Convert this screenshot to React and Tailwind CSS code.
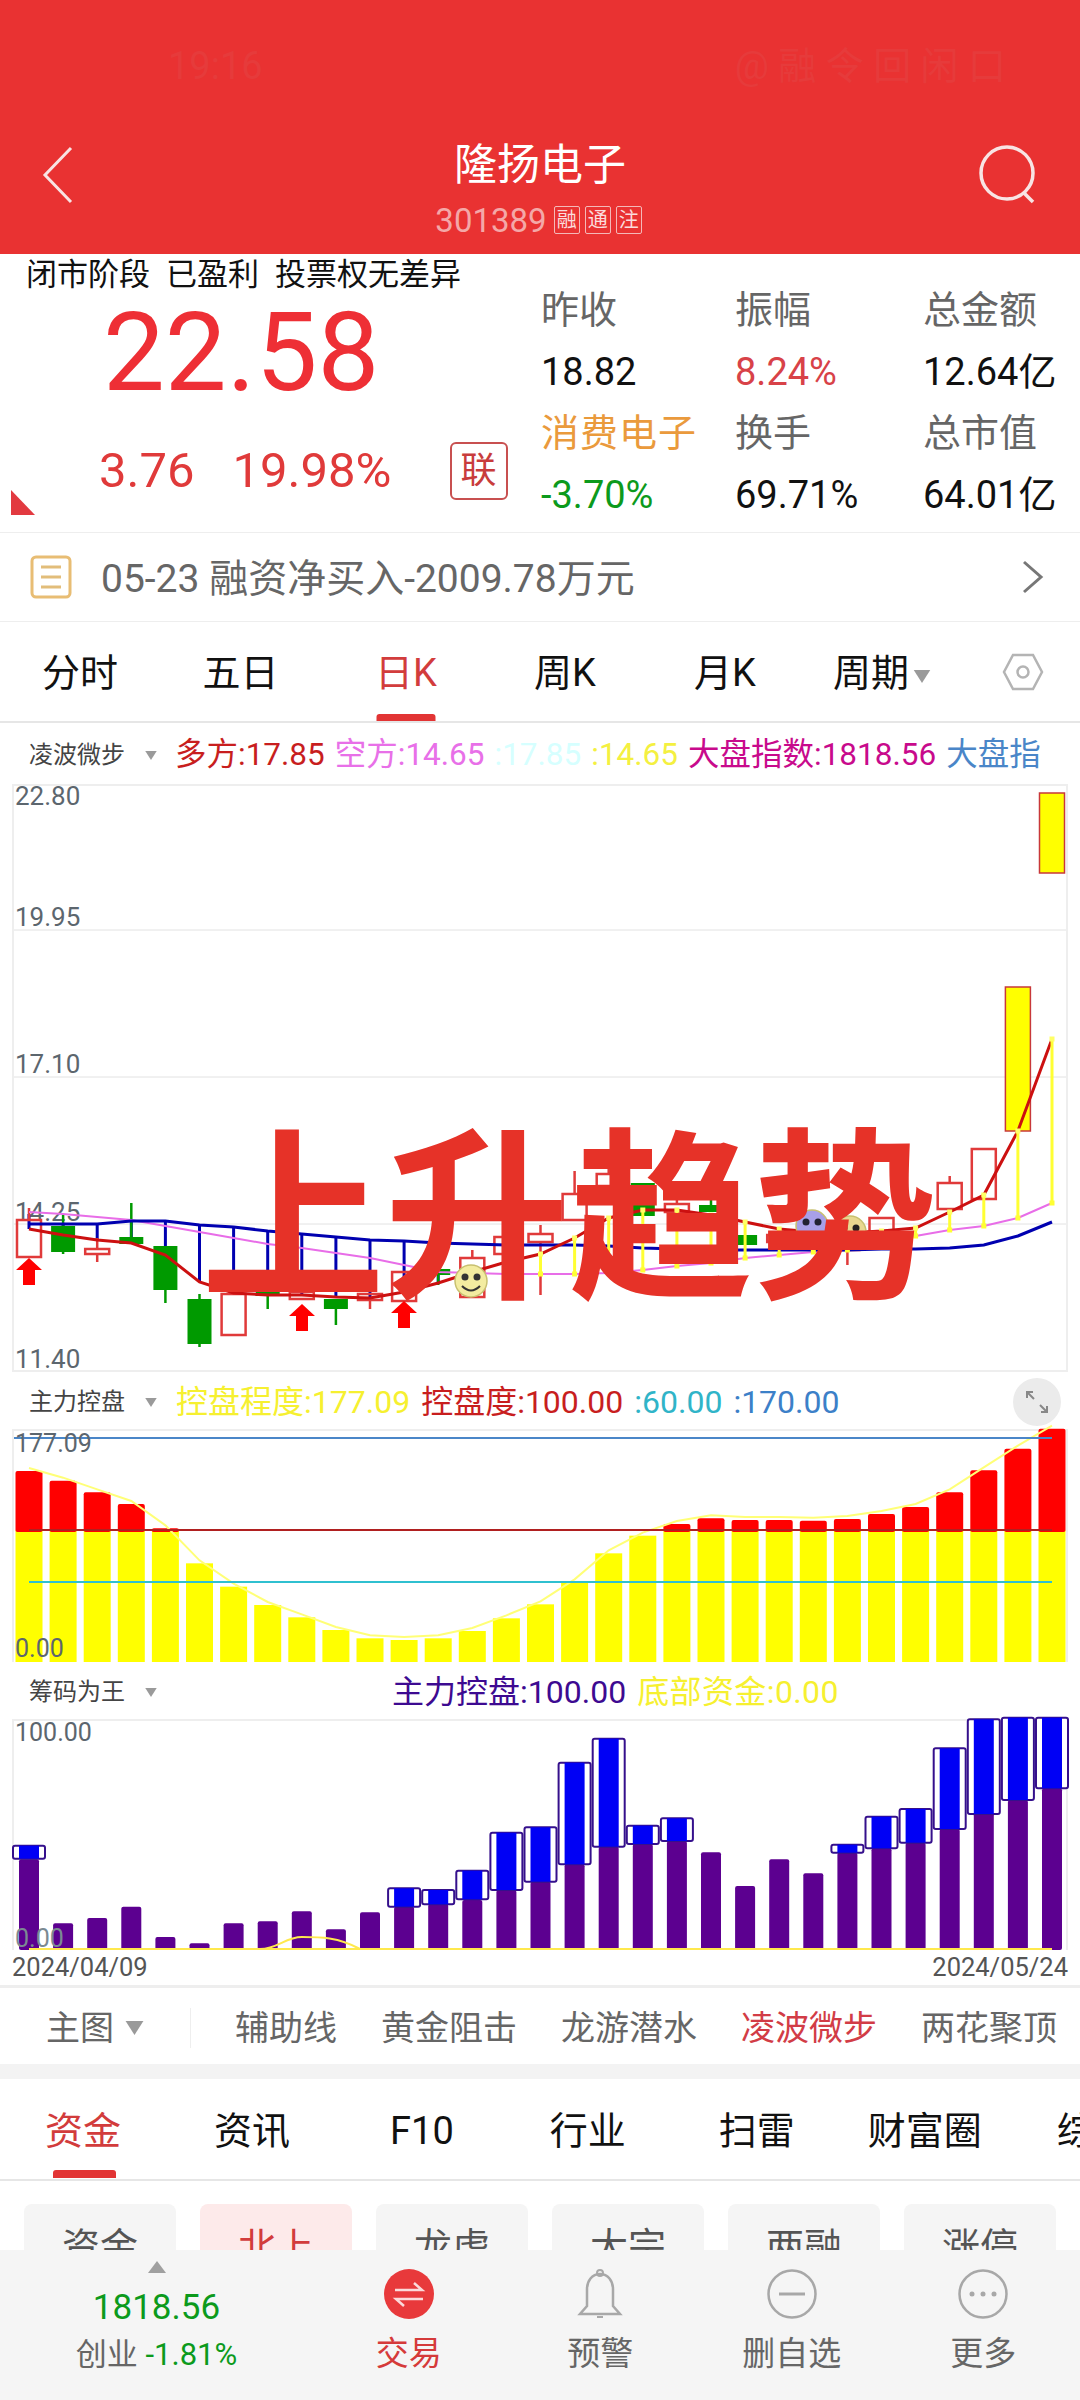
import React from "react";

const F = "font-['Roboto','Noto_Sans_CJK_SC',sans-serif]";
const X = (i) => 29 + 34.1 * i;
const pts = (a) => a.map((y, i) => `${X(i)},${y}`).join(" ");

const RED = [1229,1235,1240,1243,1255,1282,1293,1295,1295,1297,1298,1292,1283,1272,1262,1254,1238,1218,1210,1210,1215,1222,1229,1232,1233,1231,1228,1212,1195,1131,1039];
const MAG = [1212,1214,1217,1220,1226,1232,1238,1244,1248,1253,1258,1265,1272,1273,1274,1274,1274,1273,1270,1266,1263,1258,1255,1252,1250,1246,1236,1230,1226,1218,1203];
const BLU = [1224,1224,1224,1221,1221,1225,1227,1231,1234,1237,1240,1241,1243,1244,1245,1245,1245,1246,1248,1249,1250,1250,1250,1250,1250,1249,1249,1248,1245,1236,1222];

// idx, colour, top, bottom, wickTop, wickBottom
const CANDLES = [
  [0,"r",1220,1257,1208,1257],[1,"g",1226,1252,1214,1254],[2,"r",1249,1254,1238,1262],[3,"g",1237,1244,1203,1244],
  [4,"g",1246,1290,1246,1303],[5,"g",1299,1344,1294,1347],[6,"r",1294,1335,1294,1335],[7,"g",1290,1296,1290,1309],
  [8,"r",1292,1299,1292,1299],[9,"g",1299,1309,1299,1325],[10,"r",1294,1300,1294,1309],[11,"r",1272,1301,1272,1301],
  [12,"g",1269,1275,1260,1285],[13,"r",1258,1297,1250,1297],[14,"r",1237,1254,1237,1300],[15,"r",1234,1242,1225,1295],
  [16,"r",1194,1220,1171,1220],[17,"r",1174,1186,1165,1186],[18,"g",1183,1216,1183,1216],[19,"r",1204,1212,1198,1212],
  [20,"g",1205,1212,1198,1212],[21,"g",1235,1245,1235,1245],[22,"r",1235,1242,1235,1242],[24,"r",1240,1250,1240,1265],
  [25,"r",1218,1232,1218,1232],[27,"r",1183,1209,1176,1209],[28,"r",1149,1199,1149,1199],
];

const CTRL = [303,332,367,402,475,580,650,705,742,780,805,810,805,783,745,703,637,550,497,462,445,450,450,452,447,432,411,367,301,236,176];
const PURPLE = [538,730,714,680,771,790,730,724,694,748,697,680,672,660,630,605,553,500,492,483,517,618,538,580,518,505,488,447,400,360,325];
const BOXES = [[0,497,536],[11,625,680],[12,630,673],[13,572,658],[14,458,630],[15,442,605],[16,248,553],[17,176,500],[18,437,492],[19,415,483],[24,494,518],[25,410,505],[26,387,488],[27,205,447],[28,118,402],[29,113,360],[30,113,325]];

function Arrow({ x, y }) {
  return <path d={`M${x} ${y}l13 12h-7v15h-12v-15h-7z`} fill="#ff0000" />;
}

function Smiley({ x, y, fill = "#f3eca0", eye = "#333", sad }) {
  return (
    <g>
      <circle cx={x} cy={y} r="16" fill={fill} stroke="#c8c070" strokeWidth="1.5" />
      <circle cx={x - 6} cy={y - 4} r="3.5" fill={eye} />
      <circle cx={x + 6} cy={y - 4} r="3.5" fill={eye} />
      {sad ? null : <path d={`M${x - 9} ${y + 5}q9 9 18 0`} stroke={eye} strokeWidth="2" fill="none" />}
    </g>
  );
}

function MainChart() {
  return (
    <div className="relative mx-[12px] h-[588px] border-2 border-[#eeeeee]">
      <svg width="1052" height="584" viewBox="14 786 1052 584" className={`overflow-visible ${F}`}>
        {[930, 1077, 1224].map((y) => <line key={y} x1="14" x2="1066" y1={y} y2={y} stroke="#e2e2e2" strokeWidth="1" />)}
        {[["22.80",805],["19.95",926],["17.10",1073],["14.25",1221],["11.40",1368]].map(([t,y]) => (
          <text key={t} x="15" y={y} className="fill-[#5c666e] text-[26px]">{t}</text>
        ))}
        {RED.map((y, i) => (i <= 12 ? <line key={i} x1={X(i)} x2={X(i)} y1={i === 0 ? 1214 : BLU[i]} y2={y} stroke="#0000b0" strokeWidth="3" /> : null))}
        {CANDLES.map(([i, c, t, b, wt, wb]) => {
          const col = c === "r" ? "#e03a3a" : "#009a00";
          return (
            <g key={i}>
              <line x1={X(i)} x2={X(i)} y1={wt} y2={t} stroke={col} strokeWidth="2.5" />
              <line x1={X(i)} x2={X(i)} y1={b} y2={wb} stroke={col} strokeWidth="2.5" />
              {c === "r"
                ? <rect x={X(i) - 12} y={t} width="24" height={b - t} fill="none" stroke={col} strokeWidth="2.5" />
                : <rect x={X(i) - 12} y={t} width="24" height={b - t} fill={col} />}
            </g>
          );
        })}
        <rect x={X(29) - 12.5} y="987" width="25" height="144" fill="#ffff00" stroke="#c8383a" strokeWidth="1.5" />
        <rect x={X(30) - 12.5} y="793" width="25" height="80" fill="#ffff00" stroke="#c8383a" strokeWidth="1.5" />
        <polyline points={pts(MAG)} fill="none" stroke="#e86de8" strokeWidth="2" />
        <polyline points={pts(BLU)} fill="none" stroke="#0000b0" strokeWidth="3" />
        <polyline points={pts(RED)} fill="none" stroke="#cc1010" strokeWidth="3" />
        {[15,16,17,18,19,20,21,22,23,24,25,26,27,28,29,30].map((i) => (
          <g key={i}>
            <line x1={X(i)} x2={X(i)} y1={RED[i]} y2={MAG[i]} stroke="#ffff33" strokeWidth="3" />
            <rect x={X(i) - 2.5} y={RED[i] - 2.5} width="5" height="5" fill="#ffff66" />
            <rect x={X(i) - 2.5} y={MAG[i] - 2.5} width="5" height="5" fill="#ffff33" />
          </g>
        ))}
        <Arrow x={29} y={1258} />
        <Arrow x={302} y={1304} />
        <Arrow x={404} y={1301} />
        <Smiley x={471} y={1281} />
        <Smiley x={812} y={1226} fill="#a8a0e8" eye="#223" sad />
        <Smiley x={850} y={1232} fill="#e8d890" eye="#222" sad />
      </svg>
      <div className="absolute left-[187px] top-[326px] whitespace-nowrap font-['Noto_Sans_CJK_SC',sans-serif] text-[184px] font-bold leading-none text-[#e63228]">上升趋势</div>
    </div>
  );
}

function ControlChart() {
  const base = 1662;
  const Y = (z) => 1370 + z / 3;
  return (
    <div className="mx-[12px] h-[233px] border-x-2 border-t-2 border-[#eeeeee]">
      <svg width="1052" height="231" viewBox="14 1431 1052 231" className={`block overflow-visible ${F}`}>
        {CTRL.map((z, i) => {
          const top = Y(z);
          return (
            <g key={i}>
              <rect x={X(i) - 13.5} y={Math.max(top, 1530)} width="27" height={base - Math.max(top, 1530)} fill="#ffff00" />
              {top < 1530 ? <rect x={X(i) - 13.5} y={top} width="27" height={1532 - top} rx="2" fill="#ff0000" /> : null}
            </g>
          );
        })}
        <polyline points={CTRL.map((z, i) => `${X(i)},${Y(z) - 3}`).join(" ")} fill="none" stroke="#ffff77" strokeWidth="2" />
        <line x1="29" x2="1052" y1="1530" y2="1530" stroke="#b02020" strokeWidth="2" />
        <line x1="29" x2="1052" y1="1582" y2="1582" stroke="#2fc0d0" strokeWidth="2" />
        <line x1="14" x2="1052" y1="1438" y2="1438" stroke="#4a86c8" strokeWidth="2" />
        <text x="15" y="1452" className="fill-[#5c666e] text-[25px]">177.09</text>
        <text x="15" y="1657" className="fill-[#5c666e] text-[25px]">0.00</text>
      </svg>
    </div>
  );
}

function ChipChart() {
  const Y = (z) => 1680 + z / 3;
  return (
    <div className="mx-[12px] h-[231px] border-x-2 border-t-2 border-[#eeeeee]">
      <svg width="1052" height="229" viewBox="14 1721 1052 229" className={`block overflow-visible ${F}`}>
        {PURPLE.map((z, i) => (
          <rect key={i} x={X(i) - 10} y={Y(z)} width="20" height={1950 - Y(z)} rx="2" fill="#5c0090" />
        ))}
        {BOXES.map(([i, t, b]) => (
          <g key={i}>
            <rect x={X(i) - 16} y={Y(t)} width="32" height={Y(b) - Y(t)} rx="2" fill="#ffffff" stroke="#35108c" strokeWidth="2" />
            <rect x={X(i) - 10} y={Y(t)} width="20" height={Y(b) - Y(t)} fill="#0000f5" />
          </g>
        ))}
        <line x1="29" x2="1052" y1="1949" y2="1949" stroke="#ffe94d" strokeWidth="2" />
        <path d="M260 1949C278 1949 285 1937 302 1937C320 1937 338 1937 360 1949" fill="none" stroke="#ffe94d" strokeWidth="2" />
        <text x="15" y="1741" className="fill-[#5c666e] text-[25px]">100.00</text>
        <text x="15" y="1947" className="fill-[#7b8a92] text-[25px]">0.00</text>
      </svg>
    </div>
  );
}

function Caret({ className }) {
  return (
    <svg viewBox="0 0 14 11" className={className}><path d="M0 0h14l-7 11z" fill="#9a9a9a" /></svg>
  );
}

const TopTab = ({ w, active, children }) => (
  <div className={`relative flex h-full items-center justify-center pt-[4px] ${w} ${active ? "text-[#d23c3c]" : "text-[#111111]"}`}>
    {children}
    {active ? <div className="absolute bottom-0 left-1/2 h-[7px] w-[59px] -translate-x-1/2 rounded-t-[3px] bg-[#e23434]" /> : null}
  </div>
);

function Stat({ children, className = "text-[#111111]" }) {
  return <div className={`flex h-[61.5px] items-center whitespace-nowrap text-[38px] ${className}`}>{children}</div>;
}

function NavItem({ label, active, children }) {
  return (
    <div className="flex w-[191.5px] flex-col items-center pt-[19px]">
      <div className="h-[50px]">{children}</div>
      <div className={`mt-[12px] text-[33px] leading-[46px] ${active ? "text-[#d53a3a]" : "text-[#666666]"}`}>{label}</div>
    </div>
  );
}

export default function App() {
  return (
    <div className={`h-[2400px] w-[1080px] overflow-hidden bg-white font-normal ${F}`}>
      {/* header */}
      <div className="relative h-[254px] bg-[#e93232] text-white">
        <div className="flex h-[130px] items-start justify-between pl-[168px] pr-[74px] pt-[46px] text-[38px] leading-[40px] text-[#e63b3b]">
          <span>19:16</span>
          <span>@ 融 令 回 闲 口</span>
        </div>
        <div className="flex h-[70px] items-center justify-between px-[42px]">
          <div className="mt-[20px] w-[60px]">
            <svg width="32" height="58" viewBox="0 0 32 58" className="block"><path d="M29 2L3 29l26 27" fill="none" stroke="#f8e4e4" strokeWidth="3" /></svg>
          </div>
          <div className="text-[43px] leading-[56px]">隆扬电子</div>
          <svg width="60" height="60" viewBox="0 0 60 60" className="mt-[20px]"><circle cx="29" cy="28" r="26" fill="none" stroke="#f8e4e4" strokeWidth="3.5" /><path d="M46 48l9 9" stroke="#f8e4e4" strokeWidth="3.5" /></svg>
        </div>
        <div className="flex h-[40px] items-center justify-center gap-[5px] pr-[3px] text-[#f4a8a8]">
          <span className="mr-[2px] text-[33px] leading-none">301389</span>
          {["融", "通", "注"].map((t) => (
            <span key={t} className="flex h-[28px] w-[26px] items-center justify-center rounded-[2px] border border-[#f4b8b8] text-[20px] leading-none text-[#fbdcdc]">{t}</span>
          ))}
        </div>
      </div>

      {/* quote */}
      <div className="relative flex h-[279px] border-b border-[#eeeeee]">
        <div className="w-[541px]">
          <div className="flex h-[42px] items-center gap-[16px] whitespace-nowrap pl-[26px] text-[31px] text-[#111111]">
            <span>闭市阶段</span><span>已盈利</span><span>投票权无差异</span>
          </div>
          <div className="flex h-[114px] items-center pl-[103px] text-[110px] leading-none text-[#ee2f35]">22.58</div>
          <div className="flex h-[122px] items-center text-[#e03a3a]">
            <span className="ml-[99px] text-[49px]">3.76</span>
            <span className="ml-[38px] text-[49px]">19.98%</span>
            <span className="ml-[58px] flex h-[58px] w-[58px] items-center justify-center rounded-[6px] border-2 border-[#c85050] text-[36px] text-[#c83c3c]">联</span>
          </div>
        </div>
        <div className="grid grid-cols-[194px_188px_157px] content-start pt-[26px]">
          <Stat className="text-[#666666]">昨收</Stat><Stat className="text-[#666666]">振幅</Stat><Stat className="text-[#666666]">总金额</Stat>
          <Stat>18.82</Stat><Stat className="text-[#d84248]">8.24%</Stat><Stat>12.64亿</Stat>
          <Stat className="tracking-[1px] text-[#ea9a3c]">消费电子</Stat><Stat className="text-[#666666]">换手</Stat><Stat className="text-[#666666]">总市值</Stat>
          <Stat className="text-[#0c9a1c]">-3.70%</Stat><Stat>69.71%</Stat><Stat>64.01亿</Stat>
        </div>
        <svg width="24" height="25" viewBox="0 0 24 25" className="absolute bottom-[17px] left-[11px]"><path d="M0 0l24 25H0z" fill="#e23a40" /></svg>
      </div>

      {/* notice */}
      <div className="flex h-[89px] items-center border-b border-[#eeeeee] pl-[30px] pr-[36px]">
        <svg width="42" height="44" viewBox="0 0 42 44">
          <rect x="2" y="2" width="38" height="40" rx="4" fill="none" stroke="#e8bd74" strokeWidth="3" />
          <path d="M11 12h20M11 22h20M11 32h20" stroke="#e2bd7a" strokeWidth="3" />
        </svg>
        <span className="ml-[29px] flex-1 whitespace-nowrap pt-[4px] text-[39px] text-[#666666]">05-23 融资净买入-2009.78万元</span>
        <svg width="22" height="34" viewBox="0 0 22 34"><path d="M2 2l17 15L2 32" fill="none" stroke="#777777" strokeWidth="3" /></svg>
      </div>

      {/* period tabs */}
      <div className="flex h-[101px] items-center border-b-2 border-[#e6e6e6] text-[38px]">
        <TopTab w="w-[160px]">分时</TopTab>
        <TopTab w="w-[161px]">五日</TopTab>
        <TopTab w="w-[170px]" active>日K</TopTab>
        <TopTab w="w-[148px]">周K</TopTab>
        <TopTab w="w-[172px]">月K</TopTab>
        <div className="flex w-[191px] items-center pl-[22px] pt-[4px] text-[#111111]">周期<Caret className="ml-[4px] mt-[6px] h-[13px] w-[18px]" /></div>
        <svg width="42" height="38" viewBox="0 0 42 38">
          <path d="M11 2h20l9 17-9 17H11L2 19z" fill="none" stroke="#b4b4b4" strokeWidth="2.5" />
          <circle cx="21" cy="19" r="5.5" fill="none" stroke="#b4b4b4" strokeWidth="2.5" />
        </svg>
      </div>

      {/* legend 1 */}
      <div className="flex h-[61px] items-center whitespace-nowrap pl-[29px] pt-[3px] text-[31.5px] leading-none">
        <span className="w-[100px] text-[24px] text-[#444444]">凌波微步</span>
        <Caret className="ml-[15px] mr-[17px] h-[9px] w-[14px]" />
        <div className="flex gap-[10px]">
          <span className="text-[#c81e1e]">多方:17.85</span>
          <span className="text-[#e870e8]">空方:14.65</span>
          <span className="text-[#d6ffff]">:17.85</span>
          <span className="text-[#f4f040]">:14.65</span>
          <span className="text-[#c80a8c]">大盘指数:1818.56</span>
          <span className="text-[#4a86c8]">大盘指</span>
        </div>
      </div>

      <MainChart />

      {/* legend 2 */}
      <div className="relative flex h-[57px] items-center whitespace-nowrap pl-[29px] pt-[3px] text-[32px] leading-none">
        <span className="w-[100px] text-[24px] text-[#444444]">主力控盘</span>
        <Caret className="ml-[15px] mr-[18px] h-[9px] w-[14px]" />
        <div className="flex gap-[11px]">
          <span className="text-[#f6f030]">控盘程度:177.09</span>
          <span className="text-[#c81e1e]">控盘度:100.00</span>
          <span className="text-[#30b4c8]">:60.00</span>
          <span className="text-[#3c80c8]">:170.00</span>
        </div>
        <div className="absolute right-[19px] top-[6px] flex h-[48px] w-[48px] items-center justify-center rounded-full bg-[#ebebeb]">
          <svg width="26" height="26" viewBox="0 0 26 26"><path d="M3 9V3h6M3 3l7 7M23 17v6h-6M23 23l-7-7" fill="none" stroke="#888888" strokeWidth="2" /></svg>
        </div>
      </div>

      <ControlChart />

      {/* legend 3 */}
      <div className="flex h-[57px] items-center whitespace-nowrap pl-[29px] pt-[3px] text-[32px] leading-none">
        <span className="w-[100px] text-[24px] text-[#444444]">筹码为王</span>
        <Caret className="ml-[15px] h-[9px] w-[14px]" />
        <span className="ml-[234px] text-[#3d0a91]">主力控盘:100.00</span>
        <span className="ml-[11px] tracking-[0.4px] text-[#f6f030]">底部资金:0.00</span>
      </div>

      <ChipChart />

      {/* dates */}
      <div className="flex h-[38px] items-center justify-between border-b-[3px] border-[#eeeeee] px-[12px] text-[25.5px] text-[#555555]">
        <span>2024/04/09</span><span>2024/05/24</span>
      </div>

      {/* indicators */}
      <div className="flex h-[76px] items-center whitespace-nowrap pl-[46px] pt-[4px] text-[34px] text-[#666666]">
        <span>主图</span>
        <Caret className="ml-[10px] h-[14px] w-[21px]" />
        <div className="ml-[45px] mr-[44px] h-[40px] w-px bg-[#eeeeee]" />
        <div className="flex gap-[44px]">
          <span>辅助线</span><span>黄金阻击</span><span>龙游潜水</span><span className="text-[#d23c46]">凌波微步</span><span>两花聚顶</span>
        </div>
      </div>
      <div className="h-[15px] bg-[#f3f3f3]" />

      {/* section tabs */}
      <div className="relative flex h-[102px] items-center overflow-hidden whitespace-nowrap border-b-2 border-[#e6e6e6] pl-[45px] pt-[4px] text-[38px] text-[#111111]">
        <span className="text-[#d23c3c]">资金</span>
        <span className="ml-[93px]">资讯</span>
        <span className="ml-[100px]">F10</span>
        <span className="ml-[96px]">行业</span>
        <span className="ml-[93px]">扫雷</span>
        <span className="ml-[73px]">财富圈</span>
        <span className="ml-[75px]">综合</span>
        <div className="absolute bottom-[1px] left-[53px] h-[8px] w-[63px] rounded-t-[3px] bg-[#e23434]" />
      </div>

      {/* chips (cut off by the bottom bar) */}
      <div className="h-[69px] overflow-hidden pl-[24px] pt-[23px]">
        <div className="flex gap-[24px] text-[38px] text-[#555555]">
          {["资金", "北上", "龙虎", "大宗", "两融", "涨停"].map((t, i) => (
            <div key={t} className={`flex h-[86px] w-[152px] items-center justify-center rounded-t-[8px] ${i === 1 ? "bg-[#fdeaea] text-[#d23c3c]" : "bg-[#f5f5f5]"}`}>{t}</div>
          ))}
        </div>
      </div>

      {/* bottom bar */}
      <div className="flex h-[150px] bg-[#f5f5f5]">
        <div className="flex w-[313px] flex-col items-center">
          <svg width="20" height="12" viewBox="0 0 20 12" className="mt-[11px]"><path d="M10 0l9 12H1z" fill="#a0a0a0" /></svg>
          <div className="mt-[13px] text-[35px] leading-[44px] text-[#0c9a1c]">1818.56</div>
          <div className="mt-[3px] text-[31px] leading-[44px] text-[#666666]">创业 <span className="text-[#0c9a1c]">-1.81%</span></div>
        </div>
        <NavItem label="交易" active>
          <svg width="50" height="50" viewBox="0 0 50 50">
            <circle cx="25" cy="25" r="25" fill="#e8393b" />
            <path d="M11 21h27l-8-7M39 30H12l8 7" fill="none" stroke="#fbdada" strokeWidth="2.5" />
          </svg>
        </NavItem>
        <NavItem label="预警">
          <svg width="46" height="52" viewBox="0 0 46 52">
            <path d="M23 5c-8 0-13 7-13 15v17l-7 8h40l-7-8V20c0-8-5-15-13-15z" fill="none" stroke="#a8a8a8" strokeWidth="2.5" />
            <circle cx="23" cy="4" r="3" fill="none" stroke="#a8a8a8" strokeWidth="2" />
            <path d="M20 47h6v2h-6z" fill="#a8a8a8" />
          </svg>
        </NavItem>
        <NavItem label="删自选">
          <svg width="50" height="50" viewBox="0 0 50 50">
            <circle cx="25" cy="25" r="23.5" fill="none" stroke="#a8a8a8" strokeWidth="2.5" />
            <path d="M12 25h26" stroke="#a8a8a8" strokeWidth="3" />
          </svg>
        </NavItem>
        <NavItem label="更多">
          <svg width="50" height="50" viewBox="0 0 50 50">
            <circle cx="25" cy="25" r="23.5" fill="none" stroke="#a8a8a8" strokeWidth="2.5" />
            <circle cx="14" cy="25" r="2.5" fill="#a8a8a8" /><circle cx="25" cy="25" r="2.5" fill="#a8a8a8" /><circle cx="36" cy="25" r="2.5" fill="#a8a8a8" />
          </svg>
        </NavItem>
      </div>
    </div>
  );
}
